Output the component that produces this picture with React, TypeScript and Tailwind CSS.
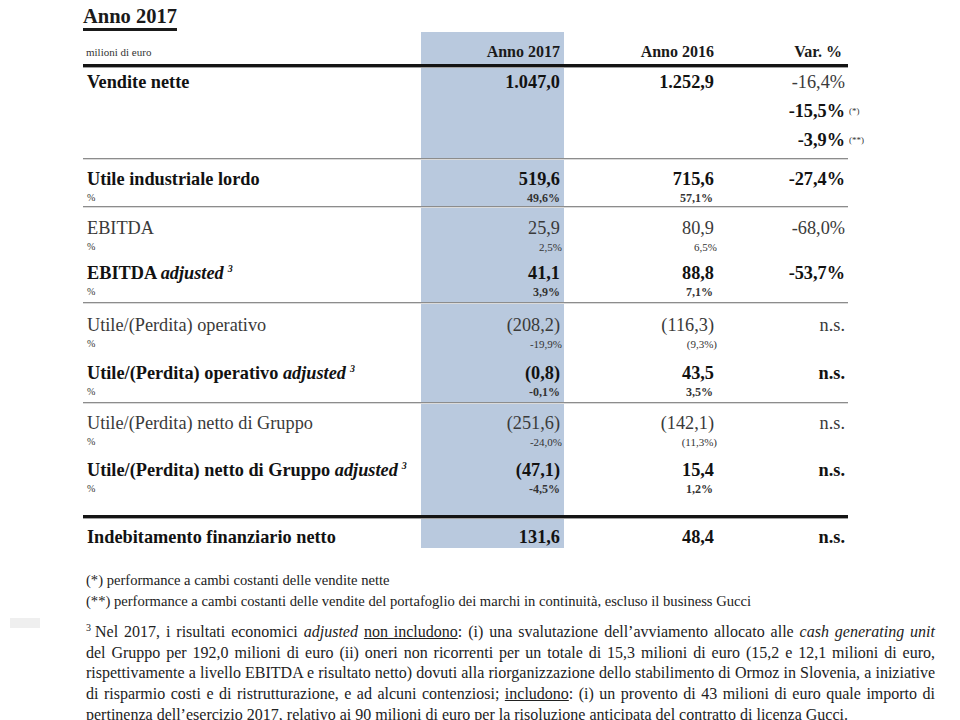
import type { ReactNode } from 'react';
import clsx from 'clsx';

type Item = {
  label?: ReactNode;
  bold?: boolean;
  a?: string;
  b?: string;
  c?: string;
  cBold?: boolean;
  pa?: string;
  pb?: string;
  mark?: string;
  pct?: boolean;
};

const COLS = 'grid grid-cols-[338px_143px_154px_130px]';
const BLUE = 'bg-[#b9c9de]';

function Adj({ children }: { children: ReactNode }) {
  return (
    <span>
      {children} <i>adjusted</i>
      <sup className="ml-[4px] -top-[0.75em] text-[10px] italic">3</sup>
    </span>
  );
}

function Group({
  items,
  pad,
  gap = 'mt-[7px]',
}: {
  items: Item[];
  pad: string;
  gap?: string;
}) {
  return (
    <div className={COLS}>
      {[0, 1, 2, 3].map((col) => (
        <div key={col} className={clsx('flex flex-col', pad, col === 1 && BLUE)}>
          {items.map((it, i) => {
            const strong = col === 3 ? (it.cBold ?? it.bold) : it.bold;
            const main = col === 0 ? it.label : col === 1 ? it.a : col === 2 ? it.b : it.c;
            const sub = col === 0 ? '%' : col === 1 ? it.pa : col === 2 ? it.pb : '';
            return (
              <div key={i} className={clsx(i > 0 && gap)}>
                <div
                  className={clsx(
                    'flex h-[22px] items-center text-[18.3px] leading-[22px] whitespace-nowrap',
                    strong ? 'font-bold text-[#121212]' : 'text-[#3a3a3a]',
                    col === 0 && 'pl-[4px]',
                    col === 1 && 'justify-end pr-[4px]',
                    col === 2 && 'justify-end pr-[4px]',
                    col === 3 && 'relative justify-end pr-[3px]',
                  )}
                >
                  <span>{main}</span>
                  {col === 3 && it.mark && (
                    <span className="absolute left-full ml-[1px] text-[9px] font-normal text-[#333]">
                      {it.mark}
                    </span>
                  )}
                </div>
                {it.pct !== false && (
                  <div
                    className={clsx(
                      'flex h-[16px] items-center leading-[14px] text-[#333]',
                      col === 0 && 'pl-[4px] text-[10px]',
                      col === 1 &&
                        (it.bold
                          ? 'justify-end pr-[4px] text-[12px] font-bold'
                          : 'justify-end pr-[2px] text-[11px]'),
                      col === 2 &&
                        (it.bold
                          ? 'justify-end pr-[5px] text-[12px] font-bold'
                          : 'justify-end pr-[1px] text-[11px]'),
                    )}
                  >
                    {sub}
                  </div>
                )}
              </div>
            );
          })}
        </div>
      ))}
    </div>
  );
}

function Line() {
  return <div className="h-[2px] border-t border-[#8c8c8c] bg-[#dadada]" />;
}

function ThickLine() {
  return <div className="h-[4px] border-t-[3px] border-[#141414] bg-[#a0a0a0]" />;
}

export default function App() {
  return (
    <div className="min-h-[720px] w-[960px] bg-white pl-[83px] font-['Liberation_Serif',serif] text-[#1a1a1a]">
      <div className="h-[32px] pt-[5px]">
        <span className="text-[20.5px] leading-[22px] font-bold underline decoration-[3px] underline-offset-[5px]">
          Anno 2017
        </span>
      </div>

      <div className="w-[765px]">
        <div className={clsx(COLS, 'h-[32px] items-end')}>
          <div className="pb-[6px] pl-[3px] text-[11px] leading-[12px] text-[#333]">milioni di euro</div>
          <div className={clsx(BLUE, 'flex h-full items-end justify-end pr-[4px] pb-[3px] text-[16px] leading-[18px] font-bold')}>
            Anno 2017
          </div>
          <div className="pr-[4px] pb-[3px] text-right text-[16px] leading-[18px] font-bold">Anno 2016</div>
          <div className="pr-[6px] pb-[3px] text-right text-[16px] leading-[18px] font-bold">Var. %</div>
        </div>
        <ThickLine />

        <Group
          pad="pt-[3px] pb-[7px]"
          items={[
            { label: 'Vendite nette', bold: true, a: '1.047,0', b: '1.252,9', c: '-16,4%', cBold: false, pct: false },
            { c: '-15,5%', bold: true, mark: '(*)', pct: false },
            { c: '-3,9%', bold: true, mark: '(**)', pct: false },
          ]}
        />
        <Line />

        <Group
          pad="pt-[8px]"
          items={[{ label: 'Utile industriale lordo', bold: true, a: '519,6', b: '715,6', c: '-27,4%', pa: '49,6%', pb: '57,1%' }]}
        />
        <Line />

        <Group
          pad="pt-[9px] pb-[2px]"
          items={[
            { label: 'EBITDA', a: '25,9', b: '80,9', c: '-68,0%', pa: '2,5%', pb: '6,5%' },
            { label: <Adj>EBITDA</Adj>, bold: true, a: '41,1', b: '88,8', c: '-53,7%', pa: '3,9%', pb: '7,1%' },
          ]}
        />
        <Line />

        <Group
          pad="pt-[10px] pb-[2px]"
          gap="mt-[10px]"
          items={[
            { label: 'Utile/(Perdita) operativo', a: '(208,2)', b: '(116,3)', c: 'n.s.', pa: '-19,9%', pb: '(9,3%)' },
            { label: <Adj>Utile/(Perdita) operativo</Adj>, bold: true, a: '(0,8)', b: '43,5', c: 'n.s.', pa: '-0,1%', pb: '3,5%' },
          ]}
        />
        <Line />

        <Group
          pad="pt-[8px] pb-[18px]"
          gap="mt-[9px]"
          items={[
            { label: 'Utile/(Perdita) netto di Gruppo', a: '(251,6)', b: '(142,1)', c: 'n.s.', pa: '-24,0%', pb: '(11,3%)' },
            { label: <Adj>Utile/(Perdita) netto di Gruppo</Adj>, bold: true, a: '(47,1)', b: '15,4', c: 'n.s.', pa: '-4,5%', pb: '1,2%' },
          ]}
        />
        <ThickLine />

        <Group
          pad="pt-[7px]"
          items={[{ label: 'Indebitamento finanziario netto', bold: true, a: '131,6', b: '48,4', c: 'n.s.', pct: false }]}
        />
      </div>

      <div className="mt-[22px] pl-[3px] text-[14.6px] leading-[21px] text-[#222]">
        <p>(*) performance a cambi costanti delle vendite nette</p>
        <p>
          (**) performance a cambi costanti delle vendite del portafoglio dei marchi in continuità, escluso il business
          Gucci
        </p>
      </div>

      <div className="-ml-[73px] mt-[10px] flex items-start">
        <div className="mt-[-4px] h-[10px] w-[30px] bg-[#efefef]" />
        <p className="ml-[46px] w-[849px] text-justify text-[16px] leading-[20.7px] text-[#222]">
          <sup className="-top-[0.6em] mr-[4px] text-[10px]">3</sup>Nel 2017, i risultati economici <i>adjusted</i>{' '}
          <u>non includono</u>: (i) una svalutazione dell’avviamento allocato alle <i>cash generating unit</i>{' '}
          del{'\u00a0'}Gruppo per 192,0 milioni di euro (ii) oneri non ricorrenti per un totale di 15,3 milioni di euro
          (15,2 e 12,1 milioni di euro, rispettivamente a livello EBITDA e risultato netto) dovuti alla
          riorganizzazione dello stabilimento di Ormoz in Slovenia, a iniziative di risparmio costi e di
          ristrutturazione, e ad alcuni contenziosi; <u>includono</u>: (i) un provento di 43 milioni di euro quale
          importo di pertinenza dell’esercizio 2017, relativo ai 90 milioni di euro per la risoluzione anticipata del
          contratto di licenza Gucci.
        </p>
      </div>
    </div>
  );
}
